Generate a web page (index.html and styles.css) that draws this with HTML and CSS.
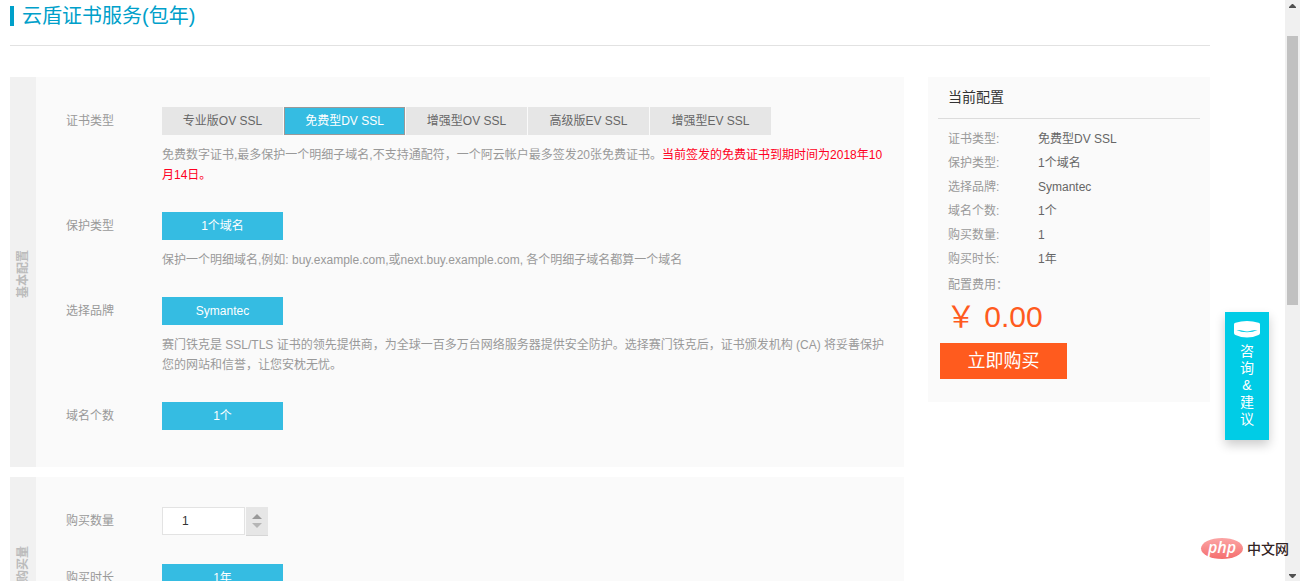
FILE: index.html
```html
<!DOCTYPE html>
<html lang="zh-CN">
<head>
<meta charset="utf-8">
<title>云盾证书服务(包年)</title>
<link rel="stylesheet" href="styles.css">
</head>
<body>
<div class="page">
  <main class="main">
    <header class="heading"><h1 class="title">云盾证书服务(包年)</h1></header>
    <div class="columns">
      <form class="config">
        <section class="panel">
          <div class="panel-side"><h2 class="panel-name">基本配置</h2></div>
          <div class="panel-body">
            <div class="row" role="group" aria-labelledby="l-type">
              <span class="label" id="l-type">证书类型</span>
              <div class="field">
                <div class="options">
                  <button type="button" class="option">专业版OV SSL</button>
                  <button type="button" class="option selected focused" aria-pressed="true">免费型DV SSL</button>
                  <button type="button" class="option">增强型OV SSL</button>
                  <button type="button" class="option">高级版EV SSL</button>
                  <button type="button" class="option">增强型EV SSL</button>
                </div>
                <p class="hint">免费数字证书,最多保护一个明细子域名,不支持通配符，一个阿云帐户最多签发20张免费证书。<span class="warn">当前签发的免费证书到期时间为2018年10月14日。</span></p>
              </div>
            </div>
            <div class="row" role="group" aria-labelledby="l-protect">
              <span class="label" id="l-protect">保护类型</span>
              <div class="field">
                <div class="options"><button type="button" class="option selected" aria-pressed="true">1个域名</button></div>
                <p class="hint">保护一个明细域名,例如: buy.example.com,或next.buy.example.com, 各个明细子域名都算一个域名</p>
              </div>
            </div>
            <div class="row" role="group" aria-labelledby="l-brand">
              <span class="label" id="l-brand">选择品牌</span>
              <div class="field">
                <div class="options"><button type="button" class="option selected" aria-pressed="true">Symantec</button></div>
                <p class="hint">赛门铁克是 SSL/TLS 证书的领先提供商，为全球一百多万台网络服务器提供安全防护。选择赛门铁克后，证书颁发机构 (CA) 将妥善保护您的网站和信誉，让您安枕无忧。</p>
              </div>
            </div>
            <div class="row" role="group" aria-labelledby="l-count">
              <span class="label" id="l-count">域名个数</span>
              <div class="field">
                <div class="options"><button type="button" class="option selected" aria-pressed="true">1个</button></div>
              </div>
            </div>
          </div>
        </section>
        <section class="panel panel-amount">
          <div class="panel-side"><h2 class="panel-name">购买量</h2></div>
          <div class="panel-body">
            <div class="row">
              <label class="label" for="qty">购买数量</label>
              <div class="field quantity">
                <input class="qty" id="qty" type="text" value="1">
                <div class="stepper">
                  <button type="button" class="step" aria-label="增加"><svg width="10" height="5" viewBox="0 0 10 5"><path d="M5 0l5 5H0z" fill="#999"/></svg></button>
                  <button type="button" class="step" aria-label="减少"><svg width="10" height="5" viewBox="0 0 10 5"><path d="M0 0h10L5 5z" fill="#b5b5b5"/></svg></button>
                </div>
              </div>
            </div>
            <div class="row" role="group" aria-labelledby="l-time">
              <span class="label" id="l-time">购买时长</span>
              <div class="field">
                <div class="options"><button type="button" class="option selected" aria-pressed="true">1年</button></div>
              </div>
            </div>
          </div>
        </section>
      </form>
      <aside class="summary">
        <h2 class="summary-title">当前配置</h2>
        <dl class="summary-list">
          <dt>证书类型:</dt><dd>免费型DV SSL</dd>
          <dt>保护类型:</dt><dd>1个域名</dd>
          <dt>选择品牌:</dt><dd>Symantec</dd>
          <dt>域名个数:</dt><dd>1个</dd>
          <dt>购买数量:</dt><dd>1</dd>
          <dt>购买时长:</dt><dd>1年</dd>
        </dl>
        <p class="fee-label">配置费用：</p>
        <p class="price">￥ 0.00</p>
        <button type="button" class="buy">立即购买</button>
      </aside>
    </div>
  </main>
  <div class="scrollbar" aria-hidden="true">
    <svg class="arrow" width="7" height="4" viewBox="0 0 7 4"><path d="M3 0h1l3 3v1H0V3z" fill="#505050"/></svg>
    <div class="track"><div class="thumb"></div></div>
    <svg class="arrow" width="7" height="4" viewBox="0 0 7 4"><path d="M0 0h7v1L4 4H3L0 1z" fill="#505050"/></svg>
  </div>
</div>
<a class="feedback" href="#">
  <svg width="28" height="18" viewBox="0 0 28 18"><path d="M1 4.500Q1 3 2.500 2.700Q8 1 14 1Q20 1 25.500 2.700Q27 3 27 4.500V13Q27 14.500 25.500 14.900Q20 17.500 14 17.500Q8 17.500 2.500 14.900Q1 14.500 1 13z" fill="#fff"/><path d="M3.500 10Q7 9.900 10 10.800Q14 12 18 10.800Q21 9.900 24.500 10Q20 12.300 14 12.300Q8 12.300 3.500 10z" fill="#00cce6"/></svg>
  <span>咨</span><span>询</span><span>&amp;</span><span>建</span><span>议</span>
</a>
<div class="brand">
  <span class="brand-php">php</span><span class="brand-name">中文网</span>
</div>
</body>
</html>
```
FILE: styles.css
```css
* { box-sizing: border-box; }
body, h1, h2, p, dl, dd { margin: 0; font-weight: normal; }
body {
  height: 100vh;
  overflow: hidden;
  background: #fff;
  color: #999;
  font: 12px/20px "Liberation Sans", "Noto Sans CJK SC", sans-serif;
}
button, input { font: inherit; border: 0; padding: 0; border-radius: 0; }
button { cursor: pointer; }
.page { display: flex; height: 100%; }
.main { flex: 1; min-width: 0; padding: 0 75px 0 10px; overflow: hidden; }

.heading { padding: 6px 0 19px; border-bottom: 1px solid #e2e2e2; margin-bottom: 31px; }
.title { border-left: 4px solid #00a0ca; padding-left: 8px; font-size: 20px; line-height: 20px; color: #00a0ca; }

.columns { display: flex; gap: 24px; align-items: flex-start; }
.config { flex: 1; min-width: 0; display: flex; flex-direction: column; gap: 10px; }
.panel { display: flex; background: #fafafa; }
.panel-amount { min-height: 170px; }
.panel-side {
  flex: 0 0 26px;
  display: flex;
  align-items: center;
  justify-content: center;
  padding-top: 4px;
  background: #f1f1f1;
}
.panel-name {
  writing-mode: vertical-rl;
  text-orientation: sideways;
  transform: rotate(180deg);
  font-size: 12px;
  font-weight: bold;
  color: #bbb;
}
.panel-body { flex: 1; min-width: 0; padding: 30px 14px 10px 30px; }
.row { display: flex; margin-bottom: 27px; }
.label { flex: 0 0 96px; line-height: 28px; }
.field { flex: 1; min-width: 0; }
.options { display: flex; gap: 1px; }
.option { width: 121px; height: 28px; background: #e6e6e6; color: #666; }
.option.selected { background: #35bce2; color: #fff; }
.option.focused { border: 1px solid #999; }
.hint { padding-top: 10px; }
.warn { color: #ff0022; }

.quantity { display: flex; gap: 1px; height: 30px; }
.qty { width: 83px; height: 28px; padding: 0 19px; border: 1px solid #e3e3e3; background: #fff; color: #333; }
.stepper {
  width: 22px;
  height: 29px;
  display: flex;
  flex-direction: column;
  background: #e6e6e6;
  border-bottom: 1px solid #d6d6d6;
  padding: 5px 0;
}
.step { flex: 1; display: flex; align-items: center; justify-content: center; background: none; }

.summary { flex: 0 0 282px; padding: 0 10px 23px; background: #fafafa; }
.summary-title { padding: 0 10px; line-height: 41px; font-size: 14px; color: #333; border-bottom: 1px solid #dcdcdc; }
.summary-list { display: grid; grid-template-columns: 90px 1fr; padding: 8px 10px 2px; line-height: 24px; }
.summary-list dd { color: #666; }
.summary-list dt, .summary-list dd { height: 24px; }
.fee-label { padding: 0 10px; line-height: 24px; }
.price { padding: 0 8px; font-size: 30px; line-height: 40px; margin-bottom: 6px; color: #ff5b1e; }
.buy { width: 127px; height: 36px; margin-left: 2px; background: #ff5b1e; color: #fff; font-size: 18px; display: block; }

.scrollbar { flex: 0 0 15px; display: flex; flex-direction: column; align-items: center; padding: 4px 2px 3px; background: #f0f0f0; }
.track { flex: 1; width: 100%; padding-top: 28px; }
.thumb { height: 50%; background: #c1c1c1; }

.feedback {
  position: absolute;
  right: 31px;
  top: 312px;
  width: 44px;
  height: 128px;
  padding-top: 8px;
  display: flex;
  flex-direction: column;
  align-items: center;
  background: #00cce6;
  color: #fff;
  font-size: 14px;
  line-height: 17px;
  text-decoration: none;
  box-shadow: 0 5px 10px rgba(0, 0, 0, .2);
}
.feedback svg { margin-bottom: 5px; }
.brand { position: absolute; right: 11px; bottom: 22px; display: flex; align-items: center; gap: 4px; }
.brand-php {
  width: 42px;
  height: 21px;
  border-radius: 50%;
  background: linear-gradient(#fba5a5, #f56e6e);
  color: #fff;
  font: italic 600 16px/19px "Open Sans", sans-serif;
  text-align: center;
}
.brand-name { font-size: 14px; font-weight: 500; color: #332424; }
```
